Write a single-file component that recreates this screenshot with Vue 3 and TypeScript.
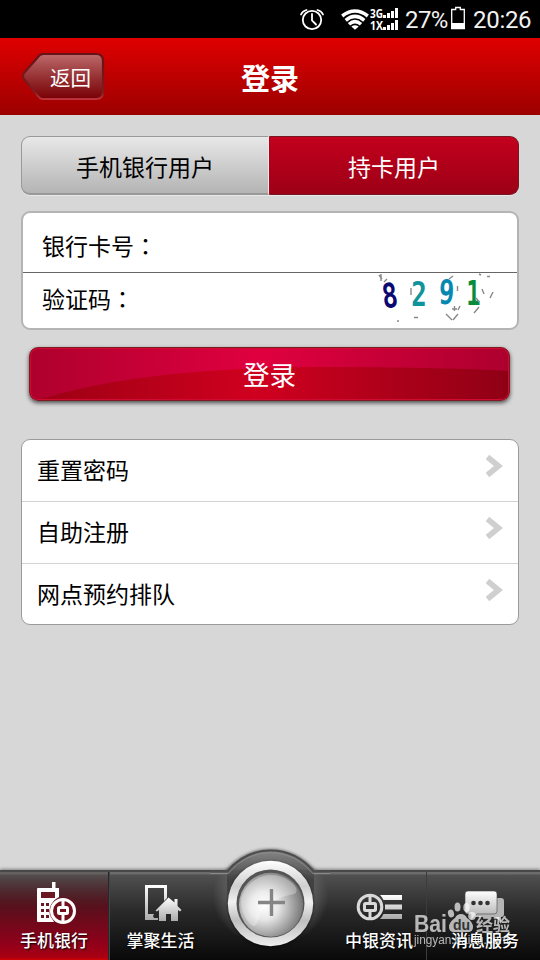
<script setup lang="ts">
import { ref } from 'vue'

const tabs: string[] = ['手机银行用户', '持卡用户']
const activeTab = ref<number>(1)
const links: string[] = ['重置密码', '自助注册', '网点预约排队']
</script>

<template>
  <div class="screen">
    <div class="status">
      <svg class="status-icons" viewBox="296 0 106 38" width="106" height="38">
        <g fill="none" stroke="#fff" stroke-width="1.8" stroke-linecap="round">
          <circle cx="312" cy="20" r="9.2" />
          <path d="M312 14v6.5l4 4M301 14.5q1.500-3.500 5.500-4.500M323 14.500q-1.500-3.500-5.500-4.500" />
        </g>
        <g fill="none" stroke="#fff" stroke-width="3.500">
          <path d="M342.200 16Q355 6 367.800 16M345.700 20.300Q355 12.500 364.300 20.300M349 24.200Q355 19 361 24.200" />
        </g>
        <path d="M351.300 26.600q3.700-2.600 7.400 0l-3.700 3.200z" fill="#fff" />
        <text class="net" x="370" y="18" textLength="13" lengthAdjust="spacingAndGlyphs">3G</text>
        <text class="net" x="370" y="30" textLength="13" lengthAdjust="spacingAndGlyphs">1X</text>
        <path fill="#fff" d="M383 15h3v3h-3zM387 13h3v5h-3zM391 11h3v7h-3zM395 8h3v10h-3zM383 27h3v3h-3zM387 25h3v5h-3zM391 23h3v7h-3zM395 20h3v10h-3z" />
      </svg>
      <span class="pct">27%</span>
      <svg class="battery" viewBox="450 6 16 24" width="16" height="24">
        <path d="M451.700 9.500h4v-2h4.600v2h4v19h-12.600z" fill="none" stroke="#fff" stroke-width="1.300" />
        <path d="M451 23h14v6h-14z" fill="#fff" />
      </svg>
      <span class="clock">20:26</span>
    </div>

    <header class="header">
      <button class="back">
        <svg class="back-shape" viewBox="0 0 84 50" width="84" height="50">
          <defs>
            <linearGradient id="bk" x2="0" y2="1">
              <stop offset="0" stop-color="#bd6a6c" />
              <stop offset=".5" stop-color="#973335" />
              <stop offset="1" stop-color="#790004" />
            </linearGradient>
            <linearGradient id="bks" x2="0" y2="1">
              <stop offset="0" stop-color="#651316" />
              <stop offset=".85" stop-color="#811b20" />
              <stop offset="1" stop-color="#b8343a" />
            </linearGradient>
          </defs>
          <path d="M22 2H75Q82 2 82 9V40Q82 47 75 47H22Q19 47 17 44L3 27Q1 24 3 21L17 5Q19 2 22 2Z" fill="url(#bk)" stroke="url(#bks)" stroke-width="2.200" />
        </svg>
        <span class="back-label">返回</span>
      </button>
      <h1 class="title">登录</h1>
    </header>

    <main class="content">
      <div class="tabs">
        <button
          v-for="(tab, i) in tabs"
          :key="tab"
          class="tab"
          :class="{ active: activeTab === i }"
          @click="activeTab = i"
        >{{ tab }}</button>
      </div>

      <div class="form">
        <div class="field"><label>银行卡号<span class="colon">：</span></label></div>
        <div class="field second">
          <label>验证码<span class="colon">：</span></label>
          <svg class="captcha" viewBox="372 273 128 52" width="128" height="52">
            <g class="digits" text-anchor="middle">
              <text transform="translate(391.500 307.500) rotate(-8) scale(.76 1)" fill="#0b0870">8</text>
              <text transform="translate(419 306) scale(.76 1)" fill="#10949b">2</text>
              <text transform="translate(446 304) rotate(3) scale(.76 1)" fill="#0788b0">9</text>
              <text transform="translate(473.500 304.500) scale(.7 1)" fill="#088c3c">1</text>
            </g>
            <g stroke="#888" stroke-width="1.400" fill="none">
              <path d="M379 275l3 4M381 274v7M384 282l3-3M411 288v7M449 279l4-3M457.500 286v5M479 274l2 1M487 276.500h3M482 289l2 5M490 298l3-6M474 313l5-6M476 298l3 4M446 314l6 6M453 320l5-6M452 309h5M454.500 306v5M458 310l2-4M414 317.500h4M397 321h2" />
            </g>
          </svg>
        </div>
      </div>

      <button class="submit">
        <svg class="gloss" viewBox="0 0 480 54" preserveAspectRatio="none">
          <defs>
            <linearGradient id="low">
              <stop offset="0" stop-color="#9d0014" />
              <stop offset=".46" stop-color="#d0001f" />
              <stop offset="1" stop-color="#8f0015" />
            </linearGradient>
          </defs>
          <path d="M10 54Q115 20 300 20Q400 20 480 24V54Z" fill="url(#low)" />
        </svg>
        <span>登录</span>
      </button>

      <ul class="links">
        <li v-for="link in links" :key="link">
          <span>{{ link }}</span>
          <svg class="chevron" viewBox="0 0 18 24" width="18" height="24">
            <path d="M1.500 3L12.500 12 1.500 21" fill="none" stroke="#cfcfcf" stroke-width="5.600" />
          </svg>
        </li>
      </ul>
    </main>

    <nav class="nav">
      <a class="item active">
        <svg viewBox="30 878 50 52" width="50" height="52">
          <path d="M53 882h3.500v6h3.500v9q-10 5-8 18l3 7H39q-1 0-1-1v-32q0-1 1-1h14z" fill="#fff" />
          <path d="M42 892h14v6H42zM42 903h3v3h-3zM47 903h3v3h-3zM42 909h3v3h-3zM47 909h3v3h-3zM42 915h3v3h-3zM47 915h3v3h-3z" fill="#6c1822" />
          <circle cx="64" cy="911" r="13.500" fill="#73101d" />
          <g fill="none" stroke="#fff" stroke-width="3">
            <circle cx="64" cy="911" r="11.500" />
            <rect x="59.500" y="907.500" width="9" height="6" rx="1" />
            <path d="M64 900v7M64 914v8" />
          </g>
        </svg>
        <span>手机银行</span>
      </a>
      <a class="item">
        <svg viewBox="136 878 50 52" width="50" height="52">
          <defs>
            <linearGradient id="silver" x2="0" y2="1">
              <stop offset="0" stop-color="#fff" />
              <stop offset="1" stop-color="#aaa" />
            </linearGradient>
          </defs>
          <path fill-rule="evenodd" fill="url(#silver)" d="M145 885h22v13l-3 3v-13h-16v26h6l-1 2 1 2h4v2h-13z" />
          <path fill="url(#silver)" d="M155.500 910.500l13-13 6 5V899h3v7l4 4-1.500 1.500-2-1.500v11h-7v-7h-5v7H159v-11l-2 1.500z" />
        </svg>
        <span>掌聚生活</span>
      </a>
      <a class="item middle" aria-label="+"></a>
      <a class="item fourth">
        <svg viewBox="353 878 50 52" width="50" height="52">
          <g fill="none" stroke="#d9d9d9" stroke-width="3">
            <circle cx="369" cy="907" r="11.800" />
            <rect x="363.500" y="903.500" width="11" height="7" rx="1" />
            <path d="M369 895v8M369 911v8" />
          </g>
          <path fill="url(#silver)" d="M379 895h22v5h-18.500q-1.500-3-3.500-5zM384 904.500h17v5h-17zM382.500 914H401v5h-22q2-2 3.500-5z" />
        </svg>
        <span>中银资讯</span>
      </a>
      <a class="item fifth">
        <svg viewBox="458 878 56 52" width="56" height="52">
          <path d="M475 898h27q3 0 3 3v13q0 3-3 3v5l-6-5h-19q-2 0-2-3z" fill="#b5b5b5" />
          <path d="M469 891h26q3 0 3 3v17q0 3-3 3h-17l-6 6v-6h-3q-3 0-3-3v-17q0-3 3-3z" fill="url(#silver)" stroke="#444" stroke-width=".6" />
          <g fill="#333"><circle cx="474.500" cy="903" r="2.300" /><circle cx="481.500" cy="903" r="2.300" /><circle cx="488.500" cy="903" r="2.300" /></g>
        </svg>
        <span>消息服务</span>
      </a>

      <svg class="hub" viewBox="210 840 120 120" width="120" height="120">
        <defs>
          <linearGradient id="hump" x2="0" y2="1">
            <stop offset="0" stop-color="#858585" />
            <stop offset=".25" stop-color="#6c6c6c" />
            <stop offset=".6" stop-color="#3a3a3a" stop-opacity=".8" />
            <stop offset="1" stop-color="#111" stop-opacity="0" />
          </linearGradient>
          <linearGradient id="ring" x2="0" y2="1">
            <stop offset="0" stop-color="#fff" />
            <stop offset=".3" stop-color="#cfcfcf" />
            <stop offset=".48" stop-color="#f1f1f1" />
            <stop offset=".7" stop-color="#bfbfbf" />
            <stop offset="1" stop-color="#eee" />
          </linearGradient>
          <radialGradient id="disc" cx=".4" cy=".52" r=".62">
            <stop offset="0" stop-color="#fff" />
            <stop offset=".35" stop-color="#e6e6e6" />
            <stop offset="1" stop-color="#707070" />
          </radialGradient>
          <radialGradient id="glow">
            <stop offset=".7" stop-color="#777" stop-opacity=".55" />
            <stop offset="1" stop-color="#777" stop-opacity="0" />
          </radialGradient>
          <filter id="soft" x="-20%" y="-30%" width="140%" height="160%"><feGaussianBlur stdDeviation="1.600" /></filter>
        </defs>
        <path d="M225 873Q244 850.500 270.500 850.500T316 873" fill="none" stroke="#666" stroke-width="3" filter="url(#soft)" />
        <ellipse cx="270.500" cy="896" rx="58" ry="50" fill="url(#glow)" clip-path="inset(24px 0 0 0)" />
        <path d="M227 873Q245 850.500 270.500 850.500T314 873V900H227Z" fill="url(#hump)" />
        <path d="M210 871.500H227Q245 850.500 270.500 850.500T314 871.500H330" fill="none" stroke="#4d4d4d" stroke-width="2" />
        <path d="M210 873.500H228Q246 852.500 270.500 852.500T313 873.500H330" fill="none" stroke="#8a8a8a" stroke-width="1" />
        <circle cx="270.500" cy="904.500" r="43" fill="#000" opacity=".55" filter="url(#soft)" />
        <circle cx="270.500" cy="903.500" r="42.700" fill="url(#ring)" />
        <circle cx="270.500" cy="903.500" r="34" fill="#555" />
        <circle cx="271" cy="904.800" r="32" fill="url(#disc)" />
        <path d="M241 900A31 31 0 0 1 295 886Q299 892 294 894Q262 900 258 921Q255 929 250 924Q240 913 241 900Z" fill="#fff" opacity=".3" />
        <path d="M271.500 889v27M258 902.500h27" stroke="#858585" stroke-width="3.400" />
      </svg>

      <svg class="watermark" viewBox="410 896 130 60" width="130" height="60">
        <g fill="#fff" opacity=".68">
          <text class="wm-logo" x="414" y="932" textLength="33" lengthAdjust="spacingAndGlyphs">Bai</text>
          <ellipse cx="451" cy="913.500" rx="3" ry="4" transform="rotate(-15 451 913.500)" />
          <ellipse cx="457.500" cy="907" rx="3" ry="4.500" />
          <ellipse cx="466.500" cy="907.500" rx="3.200" ry="4.500" />
          <ellipse cx="472" cy="916" rx="3.800" ry="4" />
          <path d="M461 914q4 0 6 4 6 4 6 9 0 5-5 5h-14q-5 0-5-5t6-9q2-4 6-4z" />
          <text class="wm-cn" x="476" y="931" textLength="34">经验</text>
          <text class="wm-url" x="414" y="944" textLength="95" lengthAdjust="spacingAndGlyphs">jingyan.baidu.com</text>
        </g>
        <text class="wm-du" x="453" y="930">du</text>
      </svg>
    </nav>
  </div>
</template>

<style>
body {
  margin: 0;
  overflow: hidden;
}
</style>

<style scoped>
.screen {
  width: 540px;
  height: 960px;
  display: flex;
  flex-direction: column;
  background: #d7d7d7;
  font-family: "Noto Sans CJK SC", sans-serif;
  color: #000;
  overflow: hidden;
}
button {
  border: 0;
  padding: 0;
  margin: 0;
  background: none;
  font-family: inherit;
  display: flex;
  align-items: center;
  justify-content: center;
}
.status {
  height: 38px;
  flex: none;
  display: flex;
  justify-content: flex-end;
  align-items: flex-start;
  padding-right: 9px;
  background: #000;
  color: #f2f2f2;
  font: 24px/40px Roboto, sans-serif;
}
.pct {
  width: 45px;
  margin-left: 3px;
  letter-spacing: -0.6px;
}
.battery {
  margin-top: 6px;
}
.clock {
  width: 58px;
  margin-left: 7px;
  letter-spacing: -0.3px;
}
.net {
  font: bold 12px "Open Sans", sans-serif;
  fill: #fff;
}
.header {
  height: 77px;
  flex: none;
  display: grid;
  grid-template-columns: 105px 1fr 105px;
  align-items: center;
  background: linear-gradient(#df0000, #9c0000);
}
.back {
  position: relative;
  width: 84px;
  height: 50px;
  margin-left: 21px;
}
.back-shape {
  position: absolute;
  inset: 0;
}
.back-label {
  position: relative;
  padding-left: 15px;
  font-size: 20.5px;
  line-height: 50px;
  color: #fff;
}
.title {
  margin: 0;
  text-align: center;
  font-size: 29px;
  line-height: 76px;
  font-weight: 700;
  color: #fff;
}
.content {
  flex: 1;
  padding: 21px 21px 0;
}
.tabs {
  display: flex;
  height: 59px;
  box-sizing: border-box;
  border-radius: 9px;
  box-shadow: 0 1px 0 #e8e8e8;
}
.tab {
  box-sizing: border-box;
  border: 1px solid #999;
  border-right-color: #eee;
  border-bottom-width: 2px;
  border-radius: 9px 0 0 9px;
  background: linear-gradient(#e8e8e8, #b4b4b4);
  font-size: 23px;
  line-height: 30px;
  color: #000;
  padding-top: 1px;
}
.tab.active {
  flex: 1;
  border: 1px solid #761722;
  border-left-color: #b5001b;
  border-radius: 0 9px 9px 0;
  background: linear-gradient(#c3001d, #9c0016);
  color: #fff;
  padding: 0;
}
.tab:first-child {
  width: 248px;
}
.form {
  height: 119px;
  box-sizing: border-box;
  margin-top: 16px;
  border: 2px solid #b4b4b4;
  border-radius: 9px;
  background: #fff;
}
.field {
  height: 60px;
  box-sizing: border-box;
  display: flex;
  align-items: center;
  justify-content: space-between;
  padding: 4px 17px 0 19px;
  font-size: 23px;
  border-bottom: 1px solid #666;
}
.field.second {
  height: 55px;
  padding-top: 0;
  padding-bottom: 6px;
  border: 0;
}
.colon {
  font-family: "Noto Sans CJK TC", sans-serif;
}
.captcha {
  align-self: flex-start;
  flex: none;
}
.digits {
  font: bold 34px "DejaVu Sans Mono", monospace;
}
.submit {
  position: relative;
  width: 481px;
  height: 54px;
  margin: 17px 0 0 8px;
  box-sizing: border-box;
  border: 1px solid #7d1a24;
  border-radius: 9px;
  background: linear-gradient(90deg, #ae002d, #e00040 48%, #ad002e);
  box-shadow: 0 2px 4px rgba(0, 0, 0, 0.65), inset 0 0 0 1px #d00a31;
  font-size: 26.5px;
  color: #fff;
}
.gloss {
  position: absolute;
  left: 1px;
  top: 0;
  width: 477px;
  height: 51px;
  border-radius: 7px;
}
.submit span {
  position: relative;
  padding-bottom: 1px;
}
.links {
  list-style: none;
  margin: 38px 0 0;
  padding: 0;
  border: 1px solid #9b9b9b;
  border-radius: 9px;
  background: #fff;
}
.links li {
  height: 61px;
  display: flex;
  justify-content: space-between;
  padding: 0 14px 0 15px;
  font-size: 23px;
  line-height: 59px;
}
.links li + li {
  border-top: 1px solid #d3d3d3;
}
.links li:last-child {
  height: 60px;
}
.chevron {
  margin-top: 14px;
}
.nav {
  position: relative;
  flex: none;
  height: 90px;
  box-sizing: border-box;
  display: flex;
  border-top: 2px solid #484848;
  background: linear-gradient(#6c6c6c 0 2px, #505050 3px, #292929 45%, #090909);
  box-shadow: 0 -1px 3px rgba(0, 0, 0, 0.4);
}
.item {
  position: relative;
  width: 108px;
  flex: none;
  display: flex;
  flex-direction: column;
  align-items: center;
  padding-top: 6px;
  box-sizing: border-box;
  border-right: 1px solid transparent;
  font-size: 17px;
  line-height: 24px;
  font-weight: 500;
  color: #fff;
  text-shadow: 1px 1px 2px #000;
}
.item span {
  margin-top: -2px;
}
.item.active {
  width: 109px;
  background: linear-gradient(rgba(88, 72, 72, 0.3) 3px, #58101c 40%, #91001a 82%, #a90012 97%, #d20000);
  border-right-color: #282828;
}
.item.active + .item {
  border-left: 1px solid #444;
  width: 109px;
  padding-right: 6px;
}
.middle {
  width: 104px;
}
.fourth {
  width: 105px;
  padding-left: 10px;
  border-right-color: #3c3c3c;
}
.fifth {
  width: 113px;
  padding-left: 4px;
}
.hub {
  position: absolute;
  left: 210px;
  top: -32px;
}
.watermark {
  position: absolute;
  left: 410px;
  top: 24px;
}
.wm-logo {
  font: bold 23px "Liberation Sans", sans-serif;
}
.wm-cn {
  font: bold 17px "Noto Sans CJK SC", sans-serif;
}
.wm-url {
  font: 12px "Liberation Sans", sans-serif;
}
.wm-du {
  font: bold 14px "Liberation Sans", sans-serif;
  fill: #333;
}
</style>
